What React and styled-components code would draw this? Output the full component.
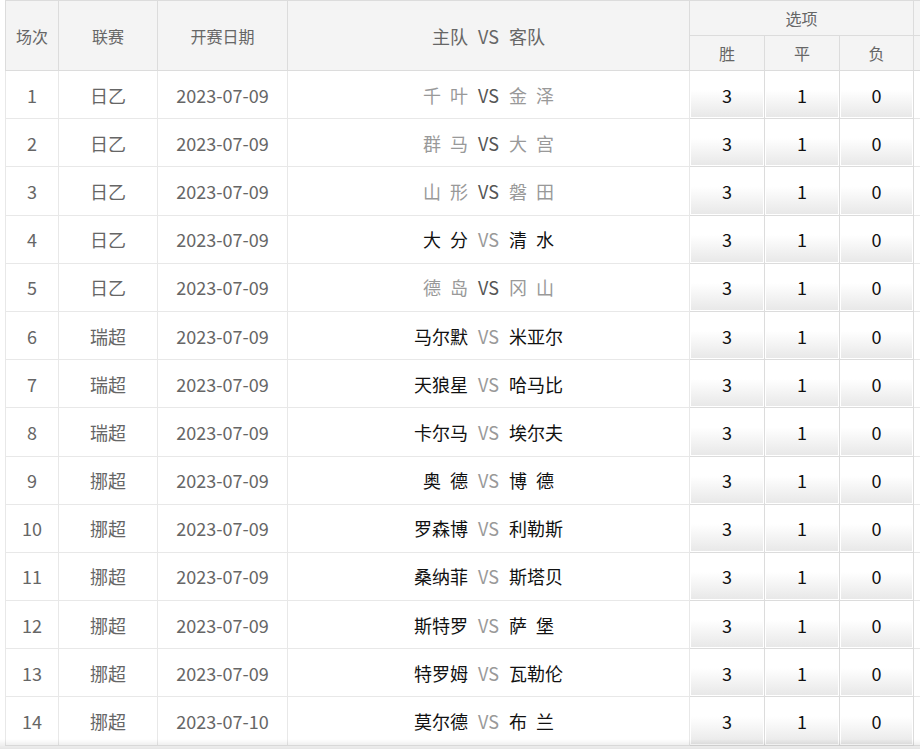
import React from "react";
import styled, { createGlobalStyle } from "styled-components";

const matches = [
  { no: 1, league: "日乙", date: "2023-07-09", home: "千 叶", away: "金 泽", muted: true },
  { no: 2, league: "日乙", date: "2023-07-09", home: "群 马", away: "大 宫", muted: true },
  { no: 3, league: "日乙", date: "2023-07-09", home: "山 形", away: "磐 田", muted: true },
  { no: 4, league: "日乙", date: "2023-07-09", home: "大 分", away: "清 水" },
  { no: 5, league: "日乙", date: "2023-07-09", home: "德 岛", away: "冈 山", muted: true },
  { no: 6, league: "瑞超", date: "2023-07-09", home: "马尔默", away: "米亚尔" },
  { no: 7, league: "瑞超", date: "2023-07-09", home: "天狼星", away: "哈马比" },
  { no: 8, league: "瑞超", date: "2023-07-09", home: "卡尔马", away: "埃尔夫" },
  { no: 9, league: "挪超", date: "2023-07-09", home: "奥 德", away: "博 德" },
  { no: 10, league: "挪超", date: "2023-07-09", home: "罗森博", away: "利勒斯" },
  { no: 11, league: "挪超", date: "2023-07-09", home: "桑纳菲", away: "斯塔贝" },
  { no: 12, league: "挪超", date: "2023-07-09", home: "斯特罗", away: "萨 堡" },
  { no: 13, league: "挪超", date: "2023-07-09", home: "特罗姆", away: "瓦勒伦" },
  { no: 14, league: "挪超", date: "2023-07-10", home: "莫尔德", away: "布 兰" },
];

const options = ["3", "1", "0"];

// two-character names are shown with a wider gap between the characters
const spaced = (name) => name.replace(" ", "\u2002");

function App() {
  return (
    <>
      <GlobalStyle />
      <Page>
        <Table>
          <colgroup>
            <col style={{ width: 53 }} />
            <col style={{ width: 99 }} />
            <col style={{ width: 130 }} />
            <col style={{ width: 402 }} />
            <col style={{ width: 75 }} />
            <col style={{ width: 75 }} />
            <col style={{ width: 74 }} />
            <col style={{ width: 40 }} />
          </colgroup>
          <thead>
            <HeadRow>
              <Th rowSpan={2}>场次</Th>
              <Th rowSpan={2}>联赛</Th>
              <Th rowSpan={2}>开赛日期</Th>
              <Th rowSpan={2}>
                <Match>
                  <Team $side="home" $head>主队</Team>
                  <Vs $head>VS</Vs>
                  <Team $side="away" $head>客队</Team>
                </Match>
              </Th>
              <Th colSpan={3}>选项</Th>
              <Th />
            </HeadRow>
            <HeadRow>
              <Th>胜</Th>
              <Th>平</Th>
              <Th>负</Th>
              <Th />
            </HeadRow>
          </thead>
          <tbody>
            {matches.map((m) => (
              <tr key={m.no}>
                <Td>{m.no}</Td>
                <Td>{m.league}</Td>
                <Td>{m.date}</Td>
                <Td>
                  <Match>
                    <Team $side="home" $muted={m.muted}>{spaced(m.home)}</Team>
                    <Vs $muted={!m.muted}>VS</Vs>
                    <Team $side="away" $muted={m.muted}>{spaced(m.away)}</Team>
                  </Match>
                </Td>
                {options.map((o) => (
                  <OptionCell key={o}>
                    <OptionButton>{o}</OptionButton>
                  </OptionCell>
                ))}
                <Td />
              </tr>
            ))}
          </tbody>
        </Table>
      </Page>
      <BottomShade />
    </>
  );
}

const GlobalStyle = createGlobalStyle`
  html, body {
    margin: 0;
    padding: 0;
    background: #fff;
    overflow: hidden;
  }
  body {
    font-family: "Noto Sans CJK SC", "Noto Sans", sans-serif;
  }
`;

const Page = styled.div`
  width: 920px;
  height: 749px;
  overflow: hidden;
  padding-left: 5px;
  box-sizing: border-box;
`;

const Table = styled.table`
  border-collapse: collapse;
  table-layout: fixed;
  width: 948px;
`;

const HeadRow = styled.tr`
  height: 35px;
`;

const Th = styled.th`
  background: #f4f4f4;
  border: 1px solid #dcdcdc;
  color: #666;
  font-size: 16px;
  font-weight: normal;
  text-align: center;
  padding: 0;
  line-height: 20px;
`;

const Td = styled.td`
  border: 1px solid #e8e8e8;
  color: #666;
  font-size: 18px;
  text-align: center;
  padding: 0;
  line-height: 24px;
`;

const Match = styled.div`
  display: grid;
  grid-template-columns: 1fr auto 1fr;
  align-items: center;
  column-gap: 10px;
`;

const Team = styled.span`
  text-align: ${(p) => (p.$side === "home" ? "right" : "left")};
  color: ${(p) => (p.$head ? "#666" : p.$muted ? "#999" : "#111")};
  font-size: 18px;
  white-space: pre;
`;

const Vs = styled.span`
  color: ${(p) => (p.$head ? "#666" : p.$muted ? "#999" : "#555")};
  font-size: 18px;
`;

const OptionCell = styled.td`
  border: 1px solid #dcdcdc;
  padding: 1px;
`;

const OptionButton = styled.div`
  height: 45.2px;
  display: flex;
  align-items: center;
  justify-content: center;
  background: linear-gradient(#ffffff 40%, #e8e8e8);
  color: #111;
  font-size: 18px;
`;

const BottomShade = styled.div`
  position: fixed;
  left: 0;
  right: 0;
  bottom: 0;
  height: 10px;
  background: linear-gradient(rgba(0, 0, 0, 0), rgba(0, 0, 0, 0.1));
  pointer-events: none;
`;

export default App;
